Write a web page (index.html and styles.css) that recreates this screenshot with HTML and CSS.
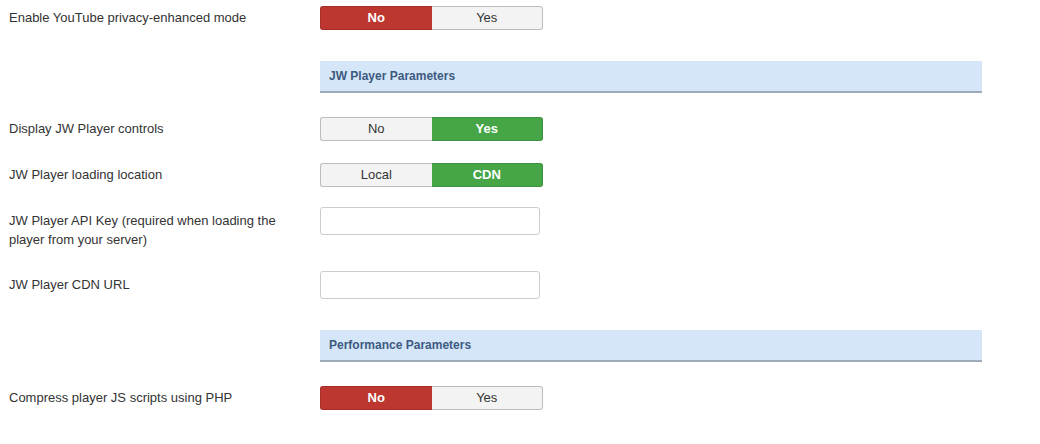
FILE: index.html
```html
<!DOCTYPE html>
<html lang="en">
<head>
    <meta charset="UTF-8">
    <title>Player Options</title>
    <link rel="stylesheet" href="styles.css">
</head>
<body>
    <div class="options">
        <!-- YouTube -->
        <div class="row">
            <label class="row-label">Enable YouTube privacy-enhanced mode</label>
            <div class="toggle">
                <span class="toggle-btn active-no">No</span>
                <span class="toggle-btn">Yes</span>
            </div>
        </div>

        <!-- JW Player -->
        <div class="section-head">JW Player Parameters</div>

        <div class="row">
            <label class="row-label">Display JW Player controls</label>
            <div class="toggle">
                <span class="toggle-btn">No</span>
                <span class="toggle-btn active-yes">Yes</span>
            </div>
        </div>

        <div class="row">
            <label class="row-label">JW Player loading location</label>
            <div class="toggle">
                <span class="toggle-btn">Local</span>
                <span class="toggle-btn active-yes">CDN</span>
            </div>
        </div>

        <div class="row row-input">
            <label class="row-label" for="jwKey">JW Player API Key (required when loading the player from your server)</label>
            <input type="text" id="jwKey" class="text-input">
        </div>

        <div class="row row-input">
            <label class="row-label" for="jwCdn">JW Player CDN URL</label>
            <input type="text" id="jwCdn" class="text-input">
        </div>

        <!-- Performance -->
        <div class="section-head">Performance Parameters</div>

        <div class="row">
            <label class="row-label">Compress player JS scripts using PHP</label>
            <div class="toggle">
                <span class="toggle-btn active-no">No</span>
                <span class="toggle-btn">Yes</span>
            </div>
        </div>
    </div>
</body>
</html>
```

FILE: styles.css
```css
* {
    margin: 0;
    padding: 0;
    box-sizing: border-box;
}

body {
    font-family: "Liberation Sans", Arial, sans-serif;
    font-size: 13px;
    color: #333;
    background-color: #fff;
    padding: 4px 0 0 9px;
}

.options {
    width: 973px;
}

/* Form rows */
.row {
    display: flex;
    align-items: flex-start;
    margin-bottom: 20px;
}

.row-input {
    margin-bottom: 22px;
}

.row-label {
    width: 311px;
    padding: 4px 30px 0 0;
    line-height: 19px;
}

/* Yes / No toggles */
.toggle {
    display: flex;
    width: 223px;
    height: 24px;
    margin-top: 2px;
}

.toggle-btn {
    flex: 1;
    text-align: center;
    line-height: 22px;
    background-color: #f3f3f3;
    border: 1px solid #bdbdbd;
    color: #333;
}

.toggle-btn:first-child {
    border-radius: 3px 0 0 3px;
    border-right: none;
}

.toggle-btn:last-child {
    border-radius: 0 3px 3px 0;
    border-left: none;
}

.active-no {
    background-color: #bd362f;
    border-color: #a8302a;
    color: #fff;
    font-weight: bold;
}

.active-yes {
    background-color: #46a546;
    border-color: #3d923d;
    color: #fff;
    font-weight: bold;
}

/* Text inputs */
.text-input {
    width: 220px;
    height: 28px;
    border: 1px solid #ccc;
    border-radius: 3px;
    background-color: #fff;
    padding: 4px 6px;
    font-size: 13px;
}

/* Section headers */
.section-head {
    margin: 31px 0 22px 311px;
    height: 32px;
    padding: 0 9px;
    line-height: 30px;
    font-size: 12px;
    font-weight: bold;
    color: #3d5a80;
    background-color: #d5e6f8;
    border-bottom: 2px solid #9eacba;
}
```
